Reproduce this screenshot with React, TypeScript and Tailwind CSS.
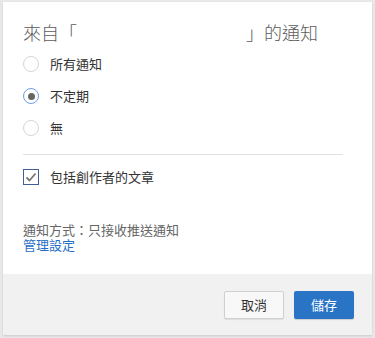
export default function App() {
  const options = [
    { label: "所有通知", checked: false },
    { label: "不定期", checked: true },
    { label: "無", checked: false },
  ];

  return (
    <div
      className="w-[375px] h-[338px] bg-[#e8e8e8] pt-[2px] pl-[3px]"
      style={{ fontFamily: '"Noto Sans CJK TC", "Noto Sans", sans-serif' }}
    >
      <div className="w-[369px] h-[333px] bg-white flex flex-col shadow-[0_1px_2px_rgba(0,0,0,0.12)]">
        <div className="flex-1 px-5 pt-[18px]">
          <h1 className="text-[18px] leading-[24px] text-[#5c5c5c] font-light flex items-center">
            <span>來自「</span>
            <span className="inline-block w-[169px]" />
            <span>」的通知</span>
          </h1>

          <div className="mt-[4px] flex flex-col">
            {options.map((o) => (
              <label key={o.label} className="flex items-center h-[32px] text-[13px] text-[#333]">
                {o.checked ? (
                  <span className="w-4 h-4 rounded-full border-[1.5px] border-[#6b9fe6] flex items-center justify-center">
                    <span className="w-[7px] h-[7px] rounded-full bg-[#666]" />
                  </span>
                ) : (
                  <span className="w-4 h-4 rounded-full border border-[#d6d6d6]" />
                )}
                <span className="ml-[11px]">{o.label}</span>
              </label>
            ))}
          </div>

          <div className="mt-[10px] h-px bg-[#e2e2e2] w-[320px]" />

          <label className="mt-[14px] flex items-center h-[16px] text-[13px] text-[#333]">
            <span className="w-4 h-4 border-[1.5px] border-[#3f5f98] flex items-center justify-center">
              <svg width="12" height="10" viewBox="0 0 12 10">
                <path d="M1.5 5.5 L4.5 8.5 L10.5 1.5" fill="none" stroke="#777" strokeWidth="1.8" />
              </svg>
            </span>
            <span className="ml-[11px]">包括創作者的文章</span>
          </label>

          <div className="mt-[37px] text-[13px] leading-[15px] flex flex-col">
            <p className="text-[#666]">通知方式：只接收推送通知</p>
            <a className="text-[#1f6fc5] cursor-pointer">管理設定</a>
          </div>
        </div>

        <div className="h-[61px] bg-[#f1f1f1] flex items-center justify-end gap-[10px] pr-[18px]">
          <button className="w-[60px] h-[28px] bg-[#f8f8f8] border border-[#d0d0d0] rounded-[2px] text-[13px] text-[#333] shadow-[0_1px_1px_rgba(0,0,0,0.08)]">
            取消
          </button>
          <button className="w-[60px] h-[28px] bg-[#2a74c6] rounded-[2px] text-[13px] text-white shadow-[0_1px_1px_rgba(0,0,0,0.15)]">
            儲存
          </button>
        </div>
      </div>
    </div>
  );
}
